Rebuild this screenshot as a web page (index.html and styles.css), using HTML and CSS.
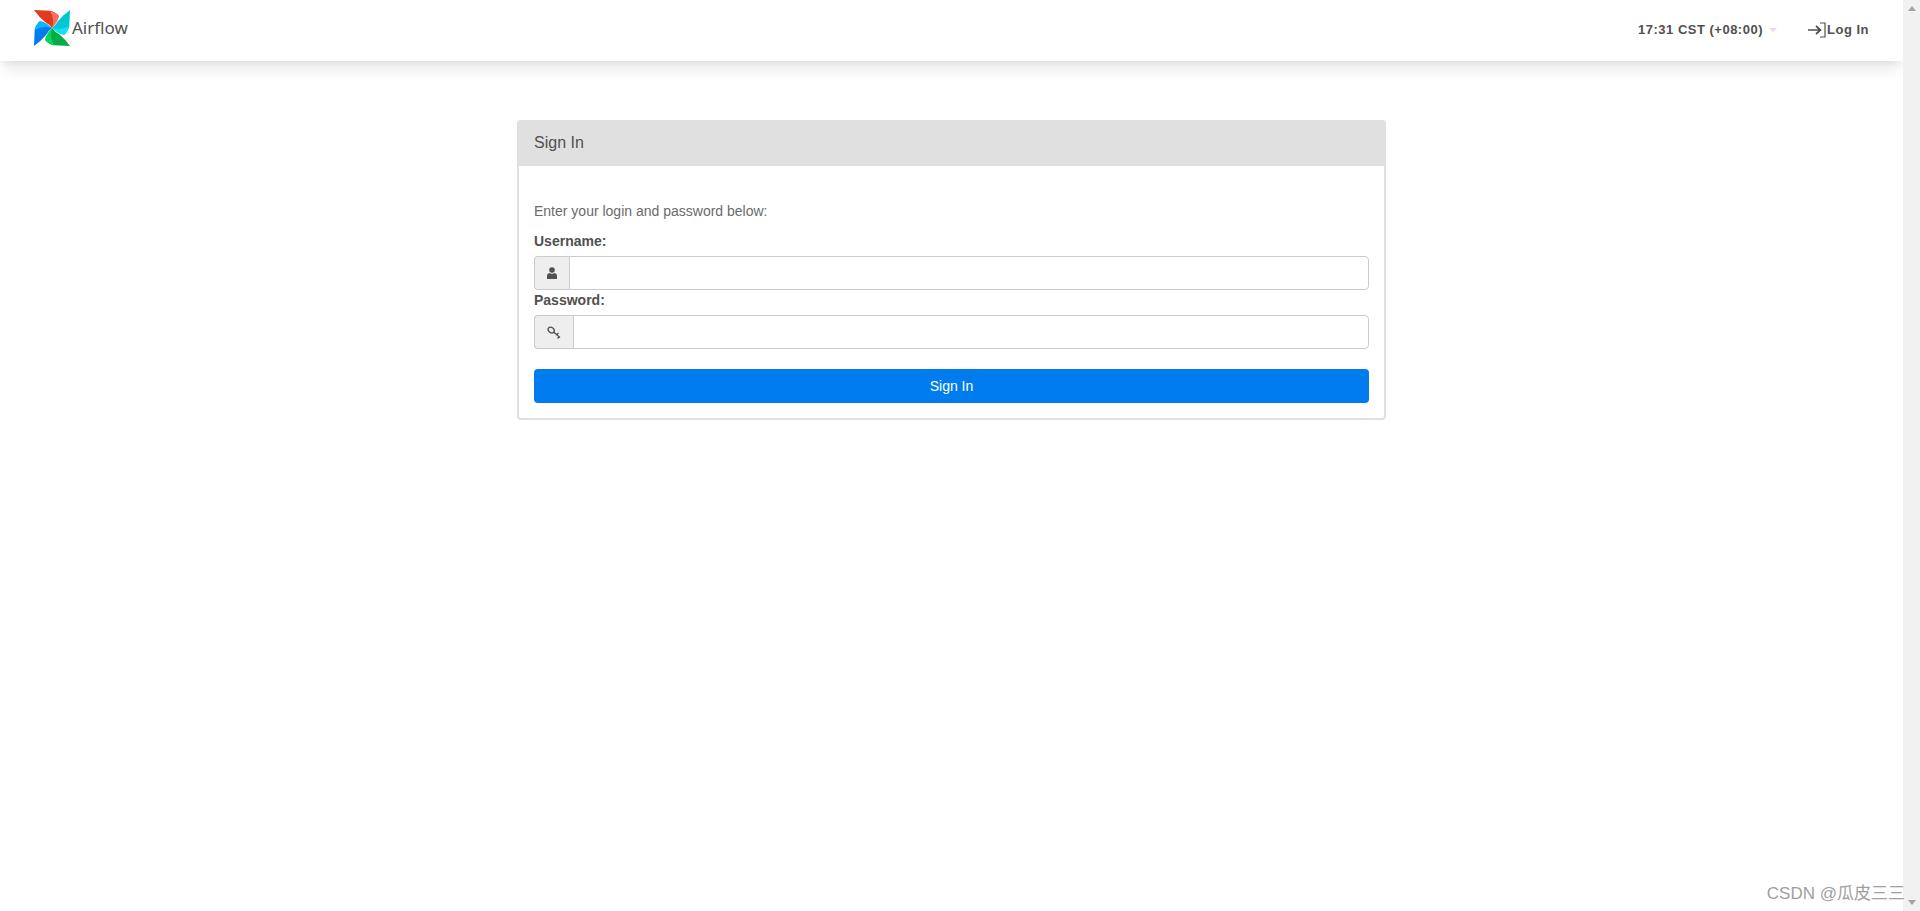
FILE: index.html
```html
<!DOCTYPE html>
<html lang="en">

<head>
    <meta charset="UTF-8">
    <title>Airflow</title>
    <link rel="stylesheet" href="styles.css">
</head>

<body>
    <div class="page">
        <nav class="navbar">
            <a class="brand" href="#">
                <svg class="brand-logo" viewBox="0 0 36 36" width="36" height="36">
                    <path fill="#e43921" d="M0 0 L16 .7 Q21 1.500 25 6 L21.500 12 L18 18 Q15 14 11 12 Q5 7 0 0Z" />
                    <path fill="#f4725b" d="M16 .7 Q21 1.500 25 6 Q24 12 18 18 Q21 10 16 .7Z" />
                    <path fill="#00c7d4" transform="rotate(90 18 18)" d="M0 0 L16 .7 Q21 1.500 25 6 L21.500 12 L18 18 Q15 14 11 12 Q5 7 0 0Z" />
                    <path fill="#11e1ee" transform="rotate(90 18 18)" d="M16 .7 Q21 1.500 25 6 Q24 12 18 18 Q21 10 16 .7Z" />
                    <path fill="#00ad46" transform="rotate(180 18 18)" d="M0 0 L16 .7 Q21 1.500 25 6 L21.500 12 L18 18 Q15 14 11 12 Q5 7 0 0Z" />
                    <path fill="#04d659" transform="rotate(180 18 18)" d="M16 .7 Q21 1.500 25 6 Q24 12 18 18 Q21 10 16 .7Z" />
                    <path fill="#017cee" transform="rotate(270 18 18)" d="M0 0 L16 .7 Q21 1.500 25 6 L21.500 12 L18 18 Q15 14 11 12 Q5 7 0 0Z" />
                    <path fill="#0cb6ff" transform="rotate(270 18 18)" d="M16 .7 Q21 1.500 25 6 Q24 12 18 18 Q21 10 16 .7Z" />
                </svg>
                <span class="brand-name">Airflow</span>
            </a>
            <div class="nav-right">
                <span class="clock">17:31 CST (+08:00)</span>
                <span class="caret"></span>
                <a class="login-link" href="#">
                    <svg class="login-icon" viewBox="0 0 18 16" width="18" height="16">
                        <path fill="none" stroke="currentColor" stroke-width="1.700" d="M0 8 H12 M8 4 L12.500 8 L8 12" />
                        <path fill="none" stroke="currentColor" stroke-width="1.200" d="M12 1 H17 V15 H12" />
                    </svg>Log In
                </a>
            </div>
        </nav>

        <main class="content">
            <div class="panel">
                <div class="panel-heading">Sign In</div>
                <form class="panel-body">
                    <p class="intro">Enter your login and password below:</p>
                    <label class="field-label" for="username">Username:</label>
                    <div class="input-group">
                        <span class="addon addon-user">
                            <svg viewBox="0 0 10 12" width="10" height="12">
                                <circle cx="5" cy="3" r="2.800" fill="currentColor" />
                                <path fill="currentColor" d="M0 12 V8.500 Q0 6.500 2.500 6 L5 7 L7.500 6 Q10 6.500 10 8.500 V12Z" />
                            </svg>
                        </span>
                        <input class="text-input" type="text" id="username">
                    </div>
                    <label class="field-label" for="password">Password:</label>
                    <div class="input-group">
                        <span class="addon addon-key">
                            <svg viewBox="0 0 14 13" width="14" height="13">
                                <ellipse cx="4.200" cy="4" rx="3.300" ry="2.500" transform="rotate(40 4.200 4)" fill="none" stroke="currentColor" stroke-width="1.400" />
                                <path fill="none" stroke="currentColor" stroke-width="1.300" d="M6.500 6 L13 11.500 M9.500 8.800 L11.500 7 M10.500 12.500 L12.500 10.500" />
                            </svg>
                        </span>
                        <input class="text-input" type="password" id="password">
                    </div>
                    <button class="btn-submit" type="button">Sign In</button>
                </form>
            </div>
        </main>
    </div>

    <div class="scrollbar">
        <span class="arrow-up"></span>
        <span class="arrow-down"></span>
    </div>

    <div class="watermark">CSDN @瓜皮三三</div>
</body>

</html>
```

FILE: styles.css
```css
:root {
    --text-color: #51504f;
    --border-color: #cbcbcb;
    --primary-color: #017cee;
}

* {
    box-sizing: border-box;
}

html,
body {
    height: 100%;
}

body {
    margin: 0;
    display: flex;
    overflow: hidden;
    font-family: "Liberation Sans", Arial, sans-serif;
    font-size: 14px;
    line-height: 20px;
    color: var(--text-color);
    background-color: white;
}

.page {
    flex: 1;
    min-width: 0;
}

.navbar {
    height: 61px;
    padding: 0 34px 0 34px;
    display: flex;
    justify-content: space-between;
    align-items: center;
    background-color: white;
    box-shadow: 0 10px 15px -3px rgba(0, 0, 0, 0.1), 0 4px 6px -2px rgba(0, 0, 0, 0.05);
}

.brand {
    display: flex;
    align-items: center;
    margin-top: -5px;
    color: var(--text-color);
    text-decoration: none;
}

.brand-logo {
    display: block;
}

.brand-name {
    margin-left: 2px;
    font-family: "Noto Sans", sans-serif;
    font-size: 17px;
}

.nav-right {
    display: flex;
    align-items: center;
    margin-top: -1px;
    font-size: 13px;
    font-weight: bold;
}

.clock {
    letter-spacing: 0.5px;
}

.caret {
    margin-left: 6px;
    border-top: 4px solid #e5dbe8;
    border-left: 4px solid transparent;
    border-right: 4px solid transparent;
}

.login-link {
    display: flex;
    align-items: center;
    margin-left: 31px;
    color: var(--text-color);
    text-decoration: none;
    letter-spacing: 0.5px;
}

.login-icon {
    margin-right: 1px;
}

.content {
    padding-top: 59px;
    display: flex;
    justify-content: center;
}

.panel {
    width: 869px;
    border: 2px solid #e0e0e0;
    border-radius: 4px;
}

.panel-heading {
    height: 46px;
    margin: -2px -2px 0;
    padding: 13px 15px 0 17px;
    background-color: #e0e0e0;
    border-radius: 4px 4px 0 0;
    font-size: 16px;
}

.panel-body {
    padding: 15px;
}

.intro {
    margin: 20px 0 10px;
    color: #6b6b6b;
}

.field-label {
    display: block;
    margin-bottom: 5px;
    font-weight: bold;
}

.input-group {
    display: flex;
    height: 34px;
}

.addon {
    display: flex;
    justify-content: center;
    align-items: center;
    background-color: #eeeeee;
    border: 1px solid var(--border-color);
    border-right: none;
    border-radius: 4px 0 0 4px;
}

.addon-user {
    width: 35px;
}

.addon-key {
    width: 39px;
}

.text-input {
    flex: 1;
    min-width: 0;
    border: 1px solid var(--border-color);
    border-radius: 0 4px 4px 0;
    background-color: white;
}

.btn-submit {
    display: block;
    width: 100%;
    height: 34px;
    margin-top: 20px;
    border: none;
    border-radius: 4px;
    background-color: var(--primary-color);
    color: white;
    font-family: inherit;
    font-size: 14px;
}

.scrollbar {
    width: 17px;
    flex-shrink: 0;
    padding: 6px 0;
    display: flex;
    flex-direction: column;
    justify-content: space-between;
    align-items: center;
    background-color: #f1f1f1;
}

.arrow-up {
    border-bottom: 5px solid #a3a3a3;
    border-left: 4px solid transparent;
    border-right: 4px solid transparent;
}

.arrow-down {
    border-top: 5px solid #a3a3a3;
    border-left: 4px solid transparent;
    border-right: 4px solid transparent;
}

.watermark {
    position: absolute;
    right: 15px;
    bottom: 7px;
    font-family: "Liberation Sans", "Noto Sans CJK SC", sans-serif;
    font-size: 17px;
    color: #a0a0a0;
}
```
